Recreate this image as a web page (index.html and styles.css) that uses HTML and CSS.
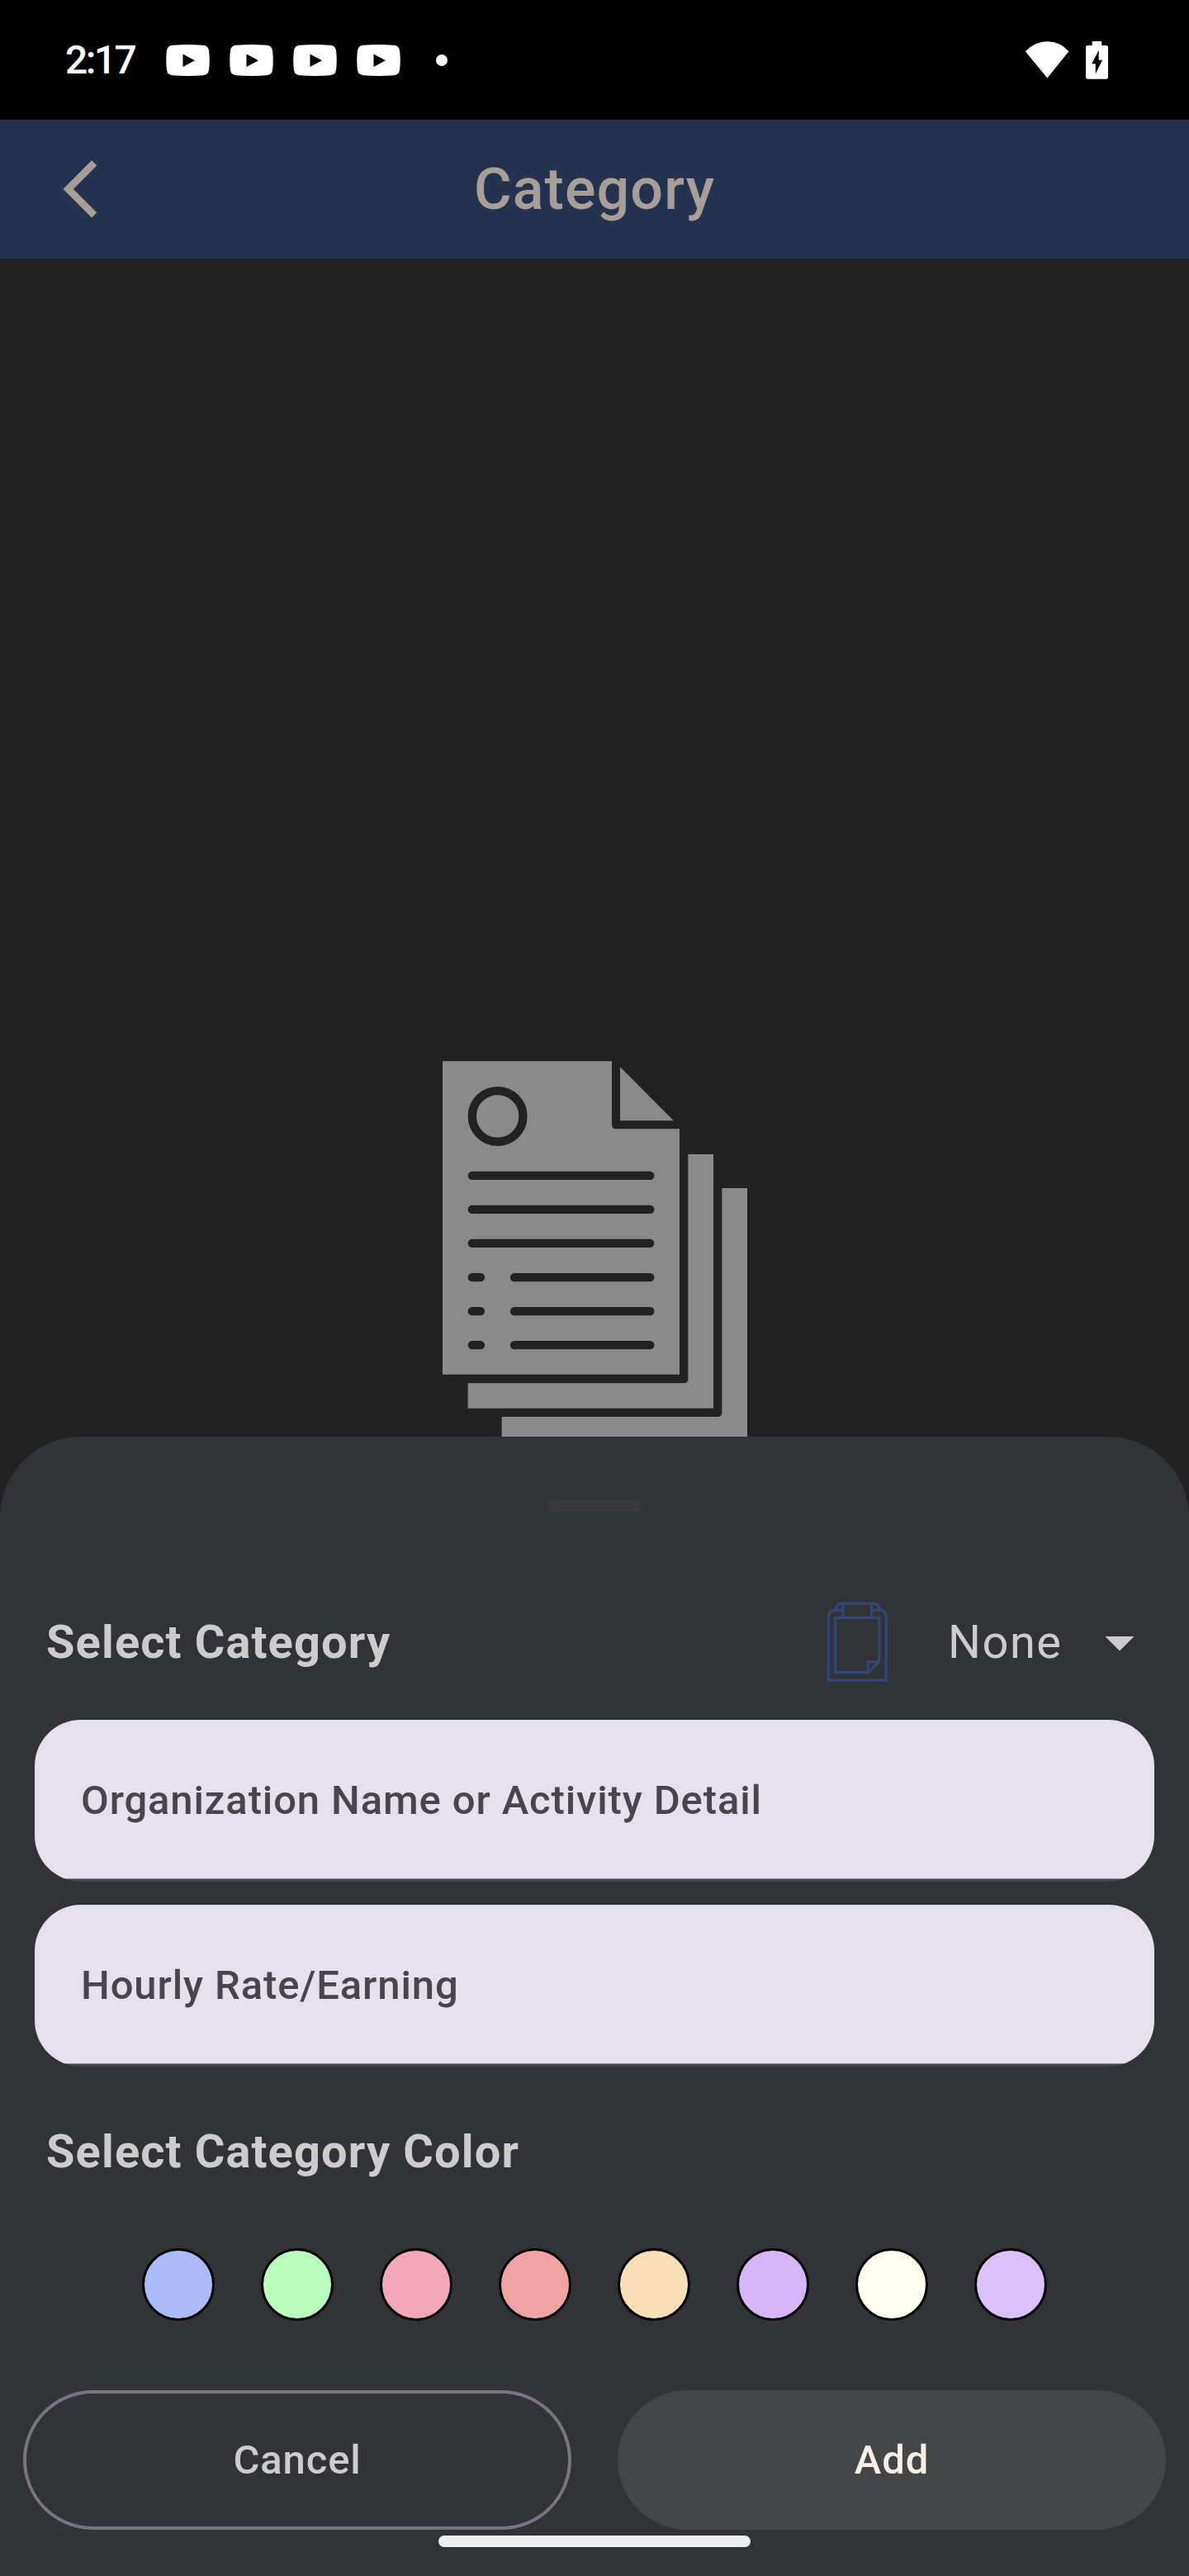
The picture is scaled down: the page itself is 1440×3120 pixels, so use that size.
FILE: index.html
```html
<!DOCTYPE html>
<html lang="en">
<head>
<meta charset="utf-8">
<title>Category</title>
<link rel="stylesheet" href="styles.css">
</head>
<body>
<svg class="defs" width="0" height="0" aria-hidden="true">
  <symbol id="video" viewBox="0 0 53 38">
    <path fill="#fff" d="M8 .8Q26.500-.8 45 .8Q51 1.300 52 7Q53.500 19 52 31Q51 36.700 45 37.200Q26.500 38.800 8 37.200Q2 36.700 1 31Q-.5 19 1 7Q2 1.300 8 .8z"/>
    <path d="M20.500 11.500v15.500l14.500-7.800z"/>
  </symbol>
</svg>
<div class="screen">
  <header class="status">
    <span class="clock">2:17</span>
    <div class="notices">
      <svg width="53" height="38"><use href="#video"/></svg>
      <svg width="53" height="38"><use href="#video"/></svg>
      <svg width="53" height="38"><use href="#video"/></svg>
      <svg width="53" height="38"><use href="#video"/></svg>
    </div>
    <span class="more"></span>
    <div class="system">
      <svg width="54" height="46" viewBox="0 0 54 46"><path fill="#fff" d="M.8 12.200Q12 .2 27.200.2T53.400 12.200L27.300 44.500z"/></svg>
      <svg width="27" height="46" viewBox="0 0 27 46"><path fill="#fff" fill-rule="evenodd" d="M7.700 0h11.500v5H24.500q2.500 0 2.500 2.500V43q0 2.700-2.500 2.700H2.500Q0 45.700 0 43V7.500Q0 5 2.500 5h5.200zM15.700 10.700 7.200 27.300h4.600v12L20.200 22.700h-4.500z"/></svg>
    </div>
  </header>
  <nav class="appbar">
    <svg class="back" width="84" height="84" viewBox="0 0 24 24"><path fill="#a69f98" d="M17.510 3.870 15.730 2.100 5.840 12l9.900 9.900 1.770-1.770L9.380 12z"/></svg>
    <h1>Category</h1>
  </nav>
  <main class="content">
    <svg width="369.333" height="462" viewBox="48 76 1108 1386">
      <g fill="#8a8a8a">
        <path d="M48 76.500H663V308q0 15 15 15H909V1215.500H48z"/>
        <path d="M693 98V292.500H887z"/>
        <path d="M940 415H1032V1338H140V1246.500H925q15 0 15-15z"/>
        <path d="M1063 538H1155.500V1461H263V1369H1047q16 0 16-15z"/>
      </g>
      <g fill="none" stroke="#222" stroke-width="31" stroke-linecap="round">
        <circle cx="248" cy="277" r="92.500"/>
        <path d="M155.500 492.500H802M155.500 615.500H802M155.500 738.500H802M155.500 862.500H186M309 862.500H802M155.500 985.500H186M309 985.500H802M155.500 1108.500H186M309 1108.500H802"/>
      </g>
    </svg>
  </main>
  <section class="sheet">
    <div class="handle"></div>
    <div class="picker">
      <h2>Select Category</h2>
      <svg class="clip" width="75" height="98" viewBox="0 0 225 294">
        <g fill="none" stroke="#334678" stroke-width="9.500">
          <path d="M60 30.500H30Q9 31 6.500 52V285.500H217V52Q214 31 195 30.500H168"/>
          <path d="M34 30Q35 6.500 60 6.500H168Q191 7 194 30M60 6V58M163 6V58"/>
          <path d="M32 58H191V217L152 257H32zM150.500 256V218H191"/>
        </g>
      </svg>
      <span class="value">None</span>
      <svg width="84" height="84" viewBox="0 0 24 24"><path fill="#ccc" d="m7 10 5 5 5-5z"/></svg>
    </div>
    <div class="fields">
      <div class="field">Organization Name or Activity Detail</div>
      <div class="field">Hourly Rate/Earning</div>
    </div>
    <h2 class="subhead">Select Category Color</h2>
    <div class="swatches">
      <i class="swatch blue"></i><i class="swatch green"></i><i class="swatch pink"></i><i class="swatch coral"></i><i class="swatch peach"></i><i class="swatch violet"></i><i class="swatch ivory"></i><i class="swatch lilac"></i>
    </div>
    <div class="actions">
      <div class="button outlined">Cancel</div>
      <div class="button filled">Add</div>
    </div>
    <div class="homebar"></div>
  </section>
</div>
</body>
</html>
```
FILE: styles.css
```css
* { box-sizing: border-box; margin: 0; padding: 0; }
body { background: #222; font-family: Roboto, sans-serif; }
svg { display: block; flex: none; }
.defs { position: absolute; }
.screen { position: relative; width: 1440px; height: 3120px; overflow: hidden; background: #222; }

.status { display: flex; align-items: center; height: 145px; padding: 0 98px 0 79px; background: #000; color: #fff; }
.clock { width: 122px; font-size: 48px; font-weight: 500; letter-spacing: -2.6px; }
.notices { display: flex; gap: 24px; }
.more { width: 14px; height: 14px; margin-left: 43px; border-radius: 50%; background: #fff; }
.system { display: flex; gap: 20px; margin-left: auto; }

.appbar { display: grid; grid-template-columns: 84px 1fr 84px; align-items: center; height: 168px; padding: 0 56px; background: #253250; }
.appbar h1 { color: #a69f98; font-size: 70px; font-weight: 500; letter-spacing: 1.1px; text-align: center; }

.content { display: flex; justify-content: center; padding: 972.333px 0 0 1px; }

.sheet { position: absolute; left: 0; right: 0; bottom: 0; height: 1380px; border-radius: 98px 98px 0 0; background: #323337; color: #ccc; }
.handle { width: 112px; height: 14px; margin: 77px auto 0; border-radius: 7px; background: #3b393e; }
.picker { display: flex; align-items: center; height: 84px; margin-top: 116px; padding: 0 42px 0 56px; }
h2 { font-size: 56px; font-weight: 700; letter-spacing: 1.12px; line-height: 84px; }
.clip { margin-left: auto; }
.value { width: 166px; margin-left: 72px; font-size: 56px; letter-spacing: 1.5px; }
.fields { display: grid; gap: 28px; padding: 52px 42px 0; }
.field { height: 196px; padding-left: 56px; border-radius: 56px; background: linear-gradient(#e5e0eb, #e5e0eb) top / 100% 192px no-repeat, linear-gradient(#928d99 0 1px, #49454f 1px) bottom / 100% 4px no-repeat; color: #49454f; font-size: 49px; font-weight: 500; letter-spacing: .875px; line-height: 196px; }
.subhead { margin: 61px 56px 0; }
.swatches { display: flex; justify-content: center; gap: 56px; margin-top: 75px; }
.swatch { width: 88px; height: 88px; border: 3px solid #000; border-radius: 50%; }
.blue { background: #a9bcf9; }
.green { background: #b9fdbe; }
.pink { background: #f1a8bb; }
.coral { background: #f1a3a1; }
.peach { background: #f9dfb6; }
.violet { background: #d8b4fa; }
.ivory { background: #feffef; }
.lilac { background: #d9c0fb; }
.actions { display: grid; grid-template-columns: 1fr 1fr; gap: 56px; margin-top: 84px; padding: 0 28px; }
.button { display: flex; align-items: center; justify-content: center; height: 169px; border-radius: 85px; font-size: 49px; font-weight: 500; letter-spacing: .875px; }
.outlined { border: 4px solid #79747e; }
.filled { background: #444546; color: #f9efe7; }
.homebar { width: 378px; height: 14px; margin: 7px auto 0; border-radius: 7px; background: #eee; }
```
